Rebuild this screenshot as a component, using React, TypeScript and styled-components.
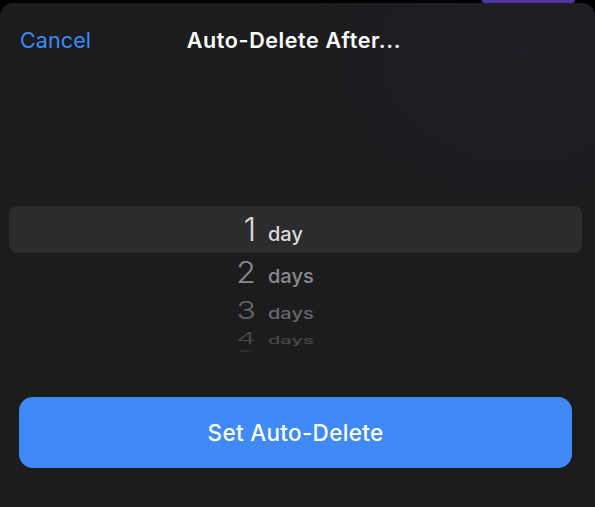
import React from "react";
import styled, { createGlobalStyle } from "styled-components";

const Global = createGlobalStyle`
  html, body { margin: 0; padding: 0; background: #000; }
  body { font-family: Inter, "Noto Sans", "Liberation Sans", sans-serif; -webkit-font-smoothing: antialiased; }
  #root { width: 595px; height: 507px; overflow: hidden; }
`;

const Page = styled.div`
  width: 595px;
  height: 507px;
  display: flex;
  flex-direction: column;
  background: #000;
`;

const Backdrop = styled.div`
  height: 3px;
  display: flex;
  justify-content: flex-end;
  padding-right: 20px;
`;

const Pill = styled.div`
  width: 93px;
  height: 3px;
  background: #4f36a3;
  border-radius: 0 0 4px 4px;
`;

const Sheet = styled.div`
  flex: 1;
  display: flex;
  flex-direction: column;
  border-radius: 13px 13px 0 0;
  background:
    radial-gradient(ellipse 280px 220px at 520px 50px, rgba(32, 31, 40, 0.8), rgba(28, 28, 30, 0) 80%),
    #1c1c1e;
  overflow: hidden;
`;

const Header = styled.div`
  height: 74px;
  display: grid;
  grid-template-columns: 1fr auto 1fr;
  align-items: center;
  padding: 0 20px;
`;

const CancelButton = styled.span`
  justify-self: start;
  font-size: 21.5px;
  color: #3d8bf2;
  font-weight: 400;
  letter-spacing: 0.1px;
`;

const Title = styled.span`
  font-size: 21.5px;
  font-weight: 600;
  color: #fff;
  letter-spacing: 0.6px;
  margin-right: 7px;
`;

const Picker = styled.div`
  height: 275px;
  padding-top: 129px;
  box-sizing: border-box;
  overflow: hidden;
  display: flex;
  flex-direction: column;
`;

const Row = styled.div<{ $h: number; $selected?: boolean }>`
  flex: none;
  height: ${(p) => p.$h}px;
  margin: 0 13px 0 9px;
  border-radius: 8px;
  background: ${(p) => (p.$selected ? "#2c2c2f" : "transparent")};
  display: flex;
  align-items: center;
`;

const RowContent = styled.div<{ $scale: number; $color: string }>`
  width: 100%;
  display: grid;
  grid-template-columns: 247px 1fr;
  column-gap: 12px;
  align-items: baseline;
  color: ${(p) => p.$color};
  transform: scaleY(${(p) => p.$scale});
  transform-origin: center;
`;

const Digit = styled.span`
  text-align: right;
  font-size: 32px;
  font-weight: 300;
  line-height: 1;
`;

const Unit = styled.span`
  font-size: 20px;
  font-weight: 500;
  line-height: 1;
`;

const Footer = styled.div`
  padding: 45px 23px 0 19px;
`;

const PrimaryButton = styled.button`
  width: 100%;
  height: 71px;
  border: none;
  border-radius: 14px;
  background: #3f8af6;
  color: #fff;
  font-family: inherit;
  font-size: 22.5px;
  font-weight: 500;
  letter-spacing: 0.3px;
  display: flex;
  align-items: center;
  justify-content: center;
`;

const rows = [
  { n: 1, unit: "day", h: 47, scale: 1, color: "#dcdcde", selected: true },
  { n: 2, unit: "days", h: 40, scale: 0.95, color: "#8a8a8d" },
  { n: 3, unit: "days", h: 36, scale: 0.76, color: "#68686b" },
  { n: 4, unit: "days", h: 19, scale: 0.48, color: "#48484b" },
  { n: 5, unit: "days", h: 10, scale: 0.2, color: "#38383b" },
];

export default function App() {
  return (
    <Page>
      <Global />
      <Backdrop>
        <Pill />
      </Backdrop>
      <Sheet>
        <Header>
          <CancelButton>Cancel</CancelButton>
          <Title>Auto-Delete After...</Title>
          <span />
        </Header>
        <Picker>
          {rows.map((r) => (
            <Row key={r.n} $h={r.h} $selected={r.selected}>
              <RowContent $scale={r.scale} $color={r.color}>
                <Digit>{r.n}</Digit>
                <Unit>{r.unit}</Unit>
              </RowContent>
            </Row>
          ))}
        </Picker>
        <Footer>
          <PrimaryButton>Set Auto-Delete</PrimaryButton>
        </Footer>
      </Sheet>
    </Page>
  );
}
